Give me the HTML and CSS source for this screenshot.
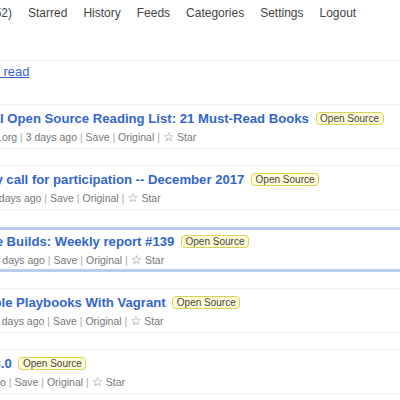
FILE: index.html
```html
<!DOCTYPE html>
<html lang="en">
<head>
<meta charset="utf-8">
<title>Unread - Miniflux</title>
<link rel="stylesheet" href="styles.css">
</head>
<body>
<div class="page">
  <header class="header">
    <nav>
      <ul class="menu">
        <li><a href="#">Unread (52)</a></li>
        <li><a href="#">Starred</a></li>
        <li><a href="#">History</a></li>
        <li><a href="#">Feeds</a></li>
        <li><a href="#">Categories</a></li>
        <li><a href="#">Settings</a></li>
        <li><a href="#">Logout</a></li>
      </ul>
    </nav>
  </header>
  <section class="page-header">
    <h1>Unread</h1>
    <ul class="page-actions">
      <li><a href="#">Mark all as read</a></li>
    </ul>
  </section>
  <div class="items">
    <article class="item">
      <div class="item-header">
        <span class="item-title"><a href="#">The Essential Open Source Reading List: 21 Must-Read Books</a></span>
        <span class="category">Open Source</span>
      </div>
      <div class="item-meta">
        <ul>
          <li><a href="#">www.opensource.org</a></li>
          <li>3 days ago</li>
          <li><a href="#">Save</a></li>
          <li><a href="#">Original</a></li>
          <li><a href="#"><span class="star-icon">☆</span> Star</a></li>
        </ul>
      </div>
    </article>
    <article class="item">
      <div class="item-header">
        <span class="item-title"><a href="#">Your monthly call for participation -- December 2017</a></span>
        <span class="category">Open Source</span>
      </div>
      <div class="item-meta">
        <ul>
          <li><a href="#">Debian News</a></li>
          <li>3 days ago</li>
          <li><a href="#">Save</a></li>
          <li><a href="#">Original</a></li>
          <li><a href="#"><span class="star-icon">☆</span> Star</a></li>
        </ul>
      </div>
    </article>
    <article class="item current-item">
      <div class="item-header">
        <span class="item-title"><a href="#">Reproducible Builds: Weekly report #139</a></span>
        <span class="category">Open Source</span>
      </div>
      <div class="item-meta">
        <ul>
          <li><a href="#">Planet Debian</a></li>
          <li>3 days ago</li>
          <li><a href="#">Save</a></li>
          <li><a href="#">Original</a></li>
          <li><a href="#"><span class="star-icon">☆</span> Star</a></li>
        </ul>
      </div>
    </article>
    <article class="item">
      <div class="item-header">
        <span class="item-title"><a href="#">Tuning Ansible Playbooks With Vagrant</a></span>
        <span class="category">Open Source</span>
      </div>
      <div class="item-meta">
        <ul>
          <li><a href="#">Planet Python</a></li>
          <li>3 days ago</li>
          <li><a href="#">Save</a></li>
          <li><a href="#">Original</a></li>
          <li><a href="#"><span class="star-icon">☆</span> Star</a></li>
        </ul>
      </div>
    </article>
    <article class="item">
      <div class="item-header">
        <span class="item-title"><a href="#">Nextcloud 13.0</a></span>
        <span class="category">Open Source</span>
      </div>
      <div class="item-meta">
        <ul>
          <li><a href="#">Heise</a></li>
          <li>3 days ago</li>
          <li><a href="#">Save</a></li>
          <li><a href="#">Original</a></li>
          <li><a href="#"><span class="star-icon">☆</span> Star</a></li>
        </ul>
      </div>
    </article>
  </div>
</div>
</body>
</html>
```

FILE: styles.css
```css
* {
  box-sizing: border-box;
}

html,
body {
  margin: 0;
  padding: 0;
  background: #fff;
}

body {
  font-family: "Liberation Sans", "DejaVu Sans", sans-serif;
  color: #333;
  overflow: hidden;
}

ul {
  list-style: none;
  margin: 0;
  padding: 0;
}

a {
  color: #3366cc;
}

.page {
  margin-left: -87px;
  width: 620px;
}

/* header navigation */
.header {
  padding-top: 6px;
}

.menu {
  display: flex;
  gap: 16px;
  padding-left: 35px;
  font-size: 12px;
  line-height: 14px;
}

.menu a {
  color: #444;
  text-decoration: none;
}

/* page header */
.page-header {
  margin-top: 20px;
}

.page-header h1 {
  margin: 0;
  font-size: 16px;
  line-height: 20px;
  font-weight: normal;
  border-bottom: 1px dotted #ddd;
}

.page-actions {
  margin-top: 3px;
  padding-left: 24px;
  font-size: 13px;
  line-height: 15px;
}

/* items */
.items {
  margin-top: 25px;
}

.item {
  border: 1px dotted #ddd;
  padding: 6px 5px 5px;
  margin-bottom: 16.33px;
}

.item.current-item {
  border: 3px solid #bce;
  padding: 4px 3px 3px;
}

.item-header {
  font-size: 13.15px;
  line-height: 15px;
  white-space: nowrap;
}

.item-title a {
  font-weight: bold;
  text-decoration: none;
  color: #3366cc;
}

.category {
  font-size: 10px;
  padding: 0 3.5px;
  margin-left: 0.3em;
  border: 1px solid #d5d458;
  border-radius: 4px;
  background: #fffcd7;
  color: #444;
  vertical-align: 1px;
}

.item-meta {
  margin-top: 5px;
  font-size: 10.5px;
  line-height: 12px;
  color: #777;
  white-space: nowrap;
}

.item-meta a {
  color: #777;
  text-decoration: none;
}

.item-meta li {
  display: inline;
}

.item-meta li:not(:last-child)::after {
  content: " |";
  color: #aaa;
}

.star-icon {
  font-size: 12.5px;
  line-height: 10px;
}
```
